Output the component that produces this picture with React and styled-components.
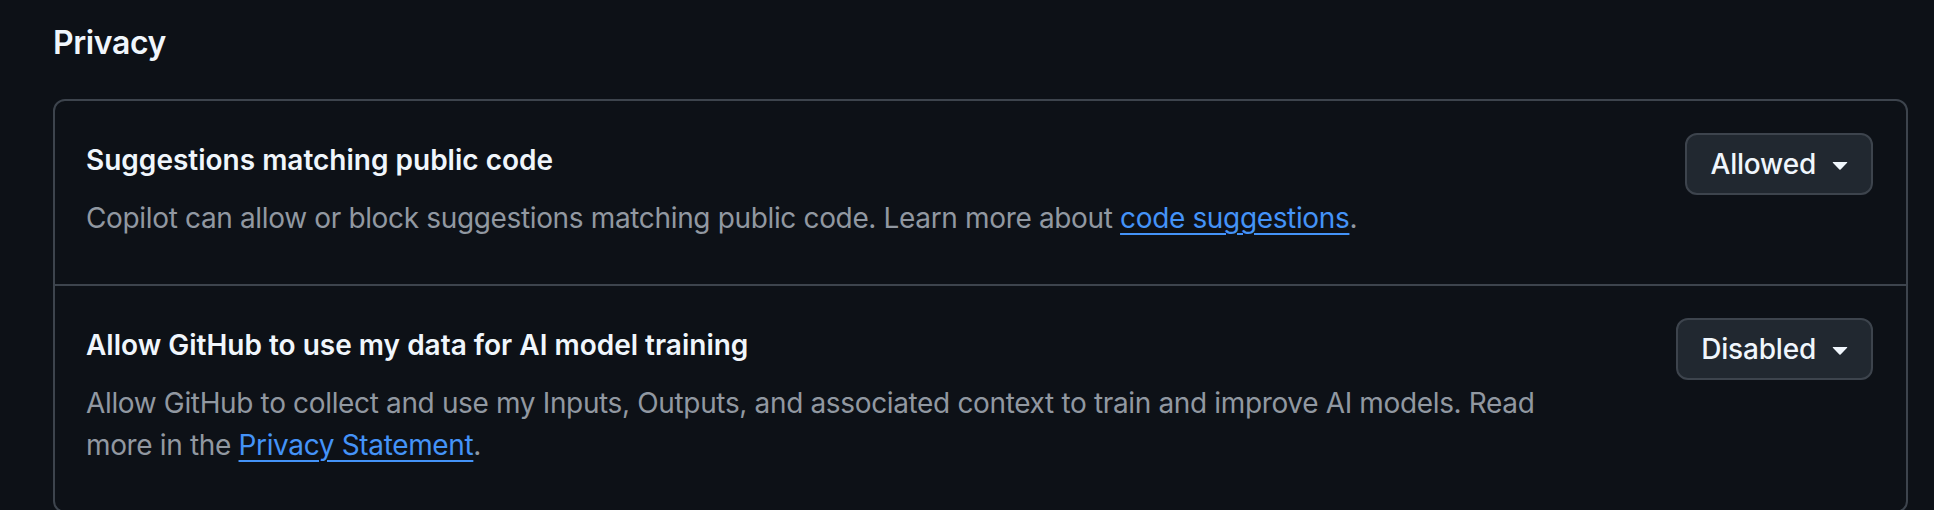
import React from "react";
import styled, { createGlobalStyle } from "styled-components";

const GlobalStyle = createGlobalStyle`
  html, body {
    margin: 0;
    padding: 0;
    background: #0d1117;
  }
  body {
    font-family: Inter, "Noto Sans", "Liberation Sans", sans-serif;
    -webkit-font-smoothing: antialiased;
  }
`;

const Page = styled.main`
  padding: 0 26px 0 53px;
  color: #f0f6fc;
`;

const Heading = styled.h2`
  margin: 0 0 32px;
  padding-top: 19px;
  font-size: 32px;
  line-height: 48px;
  font-weight: 600;
  letter-spacing: -0.4px;
  color: #f0f6fc;
`;

const Panel = styled.section`
  border: 2px solid #3d444d;
  border-radius: 12px;
  overflow: hidden;
`;

const Row = styled.div`
  display: flex;
  align-items: flex-start;
  gap: 32px;
  padding: 32px 33px 32px 31px;
  & + & {
    border-top: 2px solid #3d444d;
  }
`;

const Text = styled.div`
  flex: 1;
  min-width: 0;
  max-width: ${(p) => p.$max || "none"};
  padding: 6px 0 13px;
`;

const Title = styled.h3`
  margin: 0 0 16px;
  font-size: 28px;
  line-height: 42px;
  font-weight: 600;
  letter-spacing: 0;
  color: #f0f6fc;
`;

const Description = styled.p`
  margin: 0;
  font-size: 28px;
  line-height: 42px;
  font-weight: 400;
  letter-spacing: -0.35px;
  color: #9198a1;
`;

const Link = styled.a`
  color: #4493f8;
  text-decoration: underline;
  text-decoration-thickness: 2px;
  text-underline-offset: 5px;
`;

const MenuButton = styled.button`
  flex: none;
  margin-left: auto;
  display: inline-flex;
  align-items: center;
  gap: 8px;
  height: 62px;
  padding: 0 15px 0 23px;
  background: #212830;
  border: 2px solid #3d444d;
  border-radius: 12px;
  color: #f0f6fc;
  font-family: inherit;
  font-size: 28px;
  font-weight: 500;
  letter-spacing: -0.2px;
  cursor: pointer;
`;

const Caret = () => (
  <svg width="32" height="32" viewBox="0 0 16 16" fill="currentColor" aria-hidden="true">
    <path d="m4.427 7.427 3.396 3.396a.25.25 0 0 0 .354 0l3.396-3.396A.25.25 0 0 0 11.396 7H4.604a.25.25 0 0 0-.177.427Z" />
  </svg>
);

const Setting = ({ title, children, value, max }) => (
  <Row>
    <Text $max={max}>
      <Title>{title}</Title>
      <Description>{children}</Description>
    </Text>
    <MenuButton type="button">
      {value}
      <Caret />
    </MenuButton>
  </Row>
);

export default function App() {
  return (
    <>
      <GlobalStyle />
      <Page>
        <Heading>Privacy</Heading>
        <Panel>
          <Setting title="Suggestions matching public code" value="Allowed">
            Copilot can allow or block suggestions matching public code. Learn more about{" "}
            <Link href="#">code suggestions</Link>.
          </Setting>
          <Setting
            title="Allow GitHub to use my data for AI model training"
            value="Disabled"
            max="1500px"
          >
            Allow GitHub to collect and use my Inputs, Outputs, and associated context to train and
            improve AI models. Read more in the <Link href="#">Privacy Statement</Link>.
          </Setting>
        </Panel>
      </Page>
    </>
  );
}
